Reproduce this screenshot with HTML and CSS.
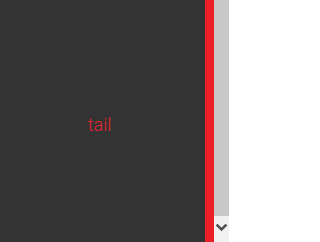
FILE: index.html
```html
<!DOCTYPE html>
<html>
<head>
<meta charset="utf-8">
<link rel="stylesheet" href="styles.css">
</head>
<body>
<div class="page">
  <main class="content"><span class="label">tail</span></main>
  <div class="stripe"></div>
  <div class="scrollbar">
    <div class="thumb"></div>
    <div class="button">
      <svg width="15" height="26" viewBox="0 0 15 26"><path d="M2.6 8.6 L7.5 13.4 L12.4 8.6" fill="none" stroke="#505050" stroke-width="2.6"/></svg>
    </div>
  </div>
</div>
</body>
</html>
```
FILE: styles.css
```css
html, body { margin: 0; padding: 0; }
body { width: 229px; height: 242px; overflow: hidden; }
.page { display: flex; width: 229px; height: 242px; }
.content {
  flex: 1;
  background: #333333;
  display: flex;
  align-items: center;
  justify-content: center;
  padding: 6px 6px 0 0;
}
.label {
  font-family: Roboto, "Liberation Sans", sans-serif;
  font-weight: 300;
  font-size: 18px;
  color: #e8242e;
}
.stripe { width: 9px; background: #ec1f28; }
.scrollbar { width: 15px; display: flex; flex-direction: column; background: #f1f1f1; }
.thumb { flex: 1; background: #c8c8c8; }
.button { height: 26px; display: flex; }
```
